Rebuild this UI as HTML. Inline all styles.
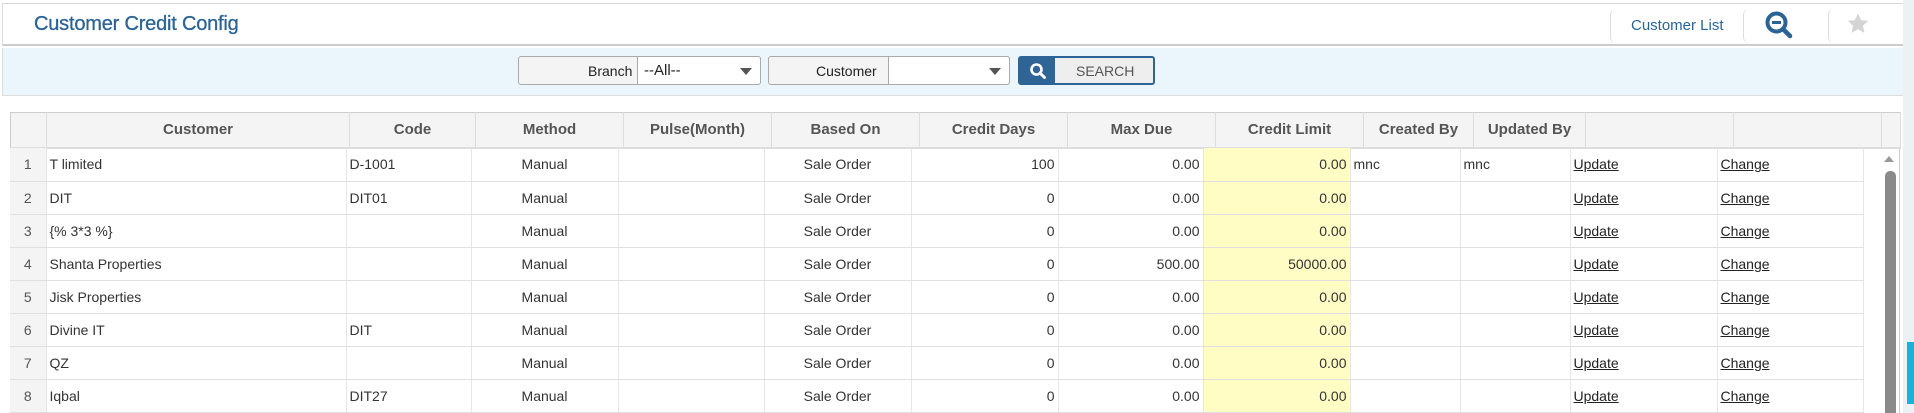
<!DOCTYPE html>
<html><head><meta charset="utf-8"><style>
*{box-sizing:border-box;margin:0;padding:0}
body{width:1914px;height:413px;overflow:hidden;background:#fff;font-family:"Liberation Sans",sans-serif;color:#333;position:relative}
.top{position:absolute;left:2px;top:3px;width:1901px;height:43px;border-top:1px solid #d6d6d6;border-bottom:2px solid #ccc;border-left:1px solid #ddd;background:#fff}
.title{position:absolute;left:31px;top:9px;font-size:20px;color:#2a6496;letter-spacing:-0.2px;-webkit-text-stroke:0.3px #2a6496}
.sep{position:absolute;top:5px;height:34px;width:8px;border-left:1px solid #ddd;border-radius:6px 0 0 6px}
.clist{position:absolute;left:1628px;top:13px;font-size:15px;color:#2a6496}
.band{position:absolute;left:2px;top:48px;width:1901px;height:48px;background:#eaf6fc;border-bottom:1px solid #ddd;border-left:1px solid #ddd}
.box{position:absolute;top:56px;height:29px;border:1px solid #aaa;border-radius:3px;background:#f4f4f4;font-size:14px}
.lbl{position:absolute;top:6px;color:#222}
.sel{position:absolute;top:-1px;height:29px;background:#fff;border:1px solid #aaa;border-radius:0 3px 3px 0}
.arr{position:absolute;right:8px;top:11px;width:0;height:0;border-left:6px solid transparent;border-right:6px solid transparent;border-top:7px solid #555}
table{position:absolute;border-collapse:collapse;table-layout:fixed;font-size:14px}
.hd{left:10px;top:112px;background:#f4f4f4;border:1px solid #ccc}
.hd th{height:35px;border-right:1px solid #ddd;font-weight:bold;color:#555;font-size:15px;text-align:center;border-bottom:2px solid #ddd}
.bd{left:10px;top:148px}
.bd td{height:33px;border-right:1px solid #e6e6e6;border-bottom:1px solid #e0e0e0;white-space:nowrap;overflow:hidden;padding:0 3px}
.bd td.n{background:#f4f4f4;text-align:center;color:#555}
.c{text-align:center}.r{text-align:right}
.y{background:#fffcc4}
u{color:#222}
.outline{position:absolute;left:10px;top:112px;width:1890px;height:301px;border-left:1px solid #ccc;border-right:1px solid #ccc}
</style></head><body>
<div class="top">
<div class="title">Customer Credit Config</div>
<div class="sep" style="left:1607px"></div>
<div class="clist">Customer List</div>
<div class="sep" style="left:1740px"></div>
<svg style="position:absolute;left:1761px;top:6px" width="30" height="30" viewBox="0 0 30 30"><circle cx="12.5" cy="12.5" r="9" fill="none" stroke="#2a6496" stroke-width="4"/><line x1="8" y1="12.5" x2="17" y2="12.5" stroke="#2a6496" stroke-width="3"/><line x1="19" y1="19" x2="26" y2="26" stroke="#2a6496" stroke-width="4.5" stroke-linecap="round"/></svg>
<div class="sep" style="left:1825px"></div>
<svg style="position:absolute;left:1843px;top:8px" width="24" height="24" viewBox="0 0 24 24"><path d="M12 1.5l3.1 6.6 7.2.8-5.4 4.9 1.5 7.1L12 17.3l-6.4 3.6 1.5-7.1L1.7 8.9l7.2-.8z" fill="#d4d4d4"/></svg>
</div>
<div class="band"></div>
<div class="box" style="left:518px;width:243px"><span class="lbl" style="left:69px">Branch</span><div class="sel" style="left:118px;width:124px"><span class="lbl" style="left:6px;top:5px;font-size:15px">--All--</span><div class="arr"></div></div></div>
<div class="box" style="left:768px;width:242px"><span class="lbl" style="left:47px">Customer</span><div class="sel" style="left:119px;width:122px"><div class="arr"></div></div></div>
<div class="box" style="left:1018px;width:137px;border:2px solid #2f6496;background:#eee"><div style="position:absolute;left:0;top:0;width:35px;height:25px;background:#2f6496"></div><svg style="position:absolute;left:9px;top:4px" width="18" height="18" viewBox="0 0 18 18"><circle cx="7.5" cy="7.5" r="5" fill="none" stroke="#fff" stroke-width="2.6"/><line x1="11" y1="11" x2="15.5" y2="15.5" stroke="#fff" stroke-width="3" stroke-linecap="round"/></svg><span class="lbl" style="left:56px;top:5px;color:#555;font-size:14px">SEARCH</span></div>
<div class="outline"></div>
<table class="hd" style="width:1890px"><colgroup><col style="width:36px"><col style="width:303px"><col style="width:126px"><col style="width:148px"><col style="width:148px"><col style="width:148px"><col style="width:148px"><col style="width:148px"><col style="width:148px"><col style="width:110px"><col style="width:112px"><col style="width:148px"><col style="width:148px"><col style="width:19px"></colgroup>
<tr><th></th><th>Customer</th><th>Code</th><th>Method</th><th>Pulse(Month)</th><th>Based On</th><th>Credit Days</th><th>Max Due</th><th>Credit Limit</th><th>Created By</th><th>Updated By</th><th></th><th></th><th></th></tr></table>
<table class="bd" style="width:1853px"><colgroup><col style="width:36px"><col style="width:300px"><col style="width:125px"><col style="width:147px"><col style="width:146px"><col style="width:147px"><col style="width:147px"><col style="width:145px"><col style="width:147px"><col style="width:110px"><col style="width:110px"><col style="width:147px"><col style="width:146px"></colgroup>
<tr><td class="n">1</td><td>T limited</td><td>D-1001</td><td class="c">Manual</td><td></td><td class="c">Sale Order</td><td class="r">100</td><td class="r">0.00</td><td class="r y">0.00</td><td>mnc</td><td>mnc</td><td><u>Update</u></td><td><u>Change</u></td></tr>
<tr><td class="n">2</td><td>DIT</td><td>DIT01</td><td class="c">Manual</td><td></td><td class="c">Sale Order</td><td class="r">0</td><td class="r">0.00</td><td class="r y">0.00</td><td></td><td></td><td><u>Update</u></td><td><u>Change</u></td></tr>
<tr><td class="n">3</td><td>{% 3*3 %}</td><td></td><td class="c">Manual</td><td></td><td class="c">Sale Order</td><td class="r">0</td><td class="r">0.00</td><td class="r y">0.00</td><td></td><td></td><td><u>Update</u></td><td><u>Change</u></td></tr>
<tr><td class="n">4</td><td>Shanta Properties</td><td></td><td class="c">Manual</td><td></td><td class="c">Sale Order</td><td class="r">0</td><td class="r">500.00</td><td class="r y">50000.00</td><td></td><td></td><td><u>Update</u></td><td><u>Change</u></td></tr>
<tr><td class="n">5</td><td>Jisk Properties</td><td></td><td class="c">Manual</td><td></td><td class="c">Sale Order</td><td class="r">0</td><td class="r">0.00</td><td class="r y">0.00</td><td></td><td></td><td><u>Update</u></td><td><u>Change</u></td></tr>
<tr><td class="n">6</td><td>Divine IT</td><td>DIT</td><td class="c">Manual</td><td></td><td class="c">Sale Order</td><td class="r">0</td><td class="r">0.00</td><td class="r y">0.00</td><td></td><td></td><td><u>Update</u></td><td><u>Change</u></td></tr>
<tr><td class="n">7</td><td>QZ</td><td></td><td class="c">Manual</td><td></td><td class="c">Sale Order</td><td class="r">0</td><td class="r">0.00</td><td class="r y">0.00</td><td></td><td></td><td><u>Update</u></td><td><u>Change</u></td></tr>
<tr><td class="n">8</td><td>Iqbal</td><td>DIT27</td><td class="c">Manual</td><td></td><td class="c">Sale Order</td><td class="r">0</td><td class="r">0.00</td><td class="r y">0.00</td><td></td><td></td><td><u>Update</u></td><td><u>Change</u></td></tr>
</table>
<div style="position:absolute;left:1884px;top:156px;width:0;height:0;border-left:5px solid transparent;border-right:5px solid transparent;border-bottom:6px solid #999"></div>
<div style="position:absolute;left:1885px;top:171px;width:11px;height:242px;background:#8a8a8a;border-radius:5px 5px 0 0"></div>
<div style="position:absolute;left:1903px;top:0;width:11px;height:413px;background:#eef1f4"></div>
<div style="position:absolute;left:1907px;top:342px;width:7px;height:62px;background:#17b3d8"></div>
</body></html>
